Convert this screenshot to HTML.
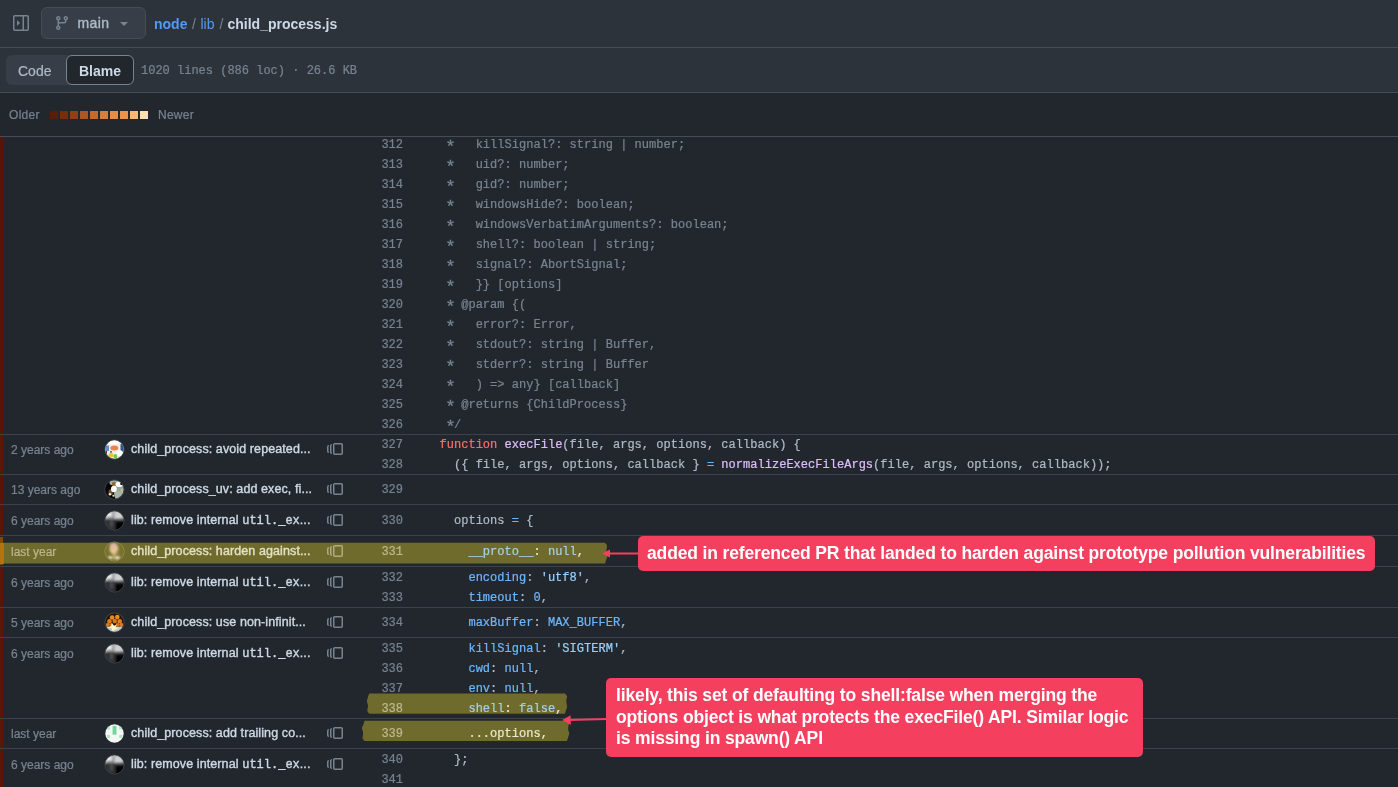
<!DOCTYPE html>
<html>
<head>
<meta charset="utf-8">
<title>node/lib/child_process.js blame</title>
<style>
*{box-sizing:border-box;margin:0;padding:0}
html,body{width:1398px;height:787px;overflow:hidden;background:#22272e}
body{position:relative;font-family:"Liberation Sans",sans-serif;color:#adbac7;font-size:12px}
.abs{position:absolute}
.hdr{position:absolute;left:0;top:0;width:1398px;height:92px;background:#2d333b}
.hl{position:absolute;left:0;width:1398px;height:1px;background:#444c56}
.sep{position:absolute;left:0;width:1398px;height:1px;background:#3a424c}
.branch{position:absolute;left:41px;top:7px;width:105px;height:32px;background:#373e47;border:1px solid #444c56;border-radius:6px}
.crumb{position:absolute;top:14px;font-size:14px;line-height:20px;font-weight:bold;white-space:nowrap}
.seg{position:absolute;left:6px;top:55px;width:128px;height:30px;background:#373e47;border-radius:6px}
.seg .on{position:absolute;left:60px;top:0;width:68px;height:30px;background:#22272e;border:1px solid #768390;border-radius:6px}
.mono{font-family:"Liberation Mono",monospace}
.ln{position:absolute;left:360px;width:43px;text-align:right;font-family:"Liberation Mono",monospace;font-size:12px;line-height:20px;height:20px;color:#768390;white-space:pre}
.cd{position:absolute;left:439.5px;font-family:"Liberation Mono",monospace;font-size:12px;line-height:20px;height:20px;color:#adbac7;white-space:pre}
.a{font-style:normal;display:inline-block;transform:translateY(2.6px) scale(1.45)}
.hi{color:#ebe8cc}.hi .n{color:#a4d0e2}
.c{color:#768390}.k{color:#f47067}.e{color:#dcbdfb}.n{color:#6cb6ff}.s{color:#96d0ff}
.tm{position:absolute;left:11px;font-size:12px;line-height:20px;height:20px;color:#768390;white-space:nowrap}
.msg{position:absolute;left:131px;font-size:12.5px;letter-spacing:0.1px;line-height:20px;height:20px;color:#cdd9e5;white-space:nowrap}
.msg .mono{font-size:12px;letter-spacing:0}
.av{position:absolute;left:104.5px;width:19px;height:19px;border-radius:50%;overflow:hidden}
.strip{position:absolute;left:0;width:3px}
.note{position:absolute;background:#f43f5e;border-radius:5px;color:#fff;font-weight:bold;white-space:nowrap}
.cd,.ln,.tm,#tcode,#stats,#older,#newer{-webkit-text-stroke:0.22px currentColor}
.msg,#main{-webkit-text-stroke:0.38px currentColor}
.cd{letter-spacing:0.025px}
#wrap{position:absolute;left:0;top:0;width:1398px;height:787px;will-change:transform}
</style>
</head>
<body>
<div id="wrap">
<div class="hdr"></div>
<div class="hl" style="top:47px"></div>
<div class="hl" style="top:92px"></div>
<div class="hl" style="top:136px"></div>

<!-- header row 1 -->
<svg class="abs" style="left:13px;top:15px" width="16" height="16" viewBox="0 0 16 16" fill="#768390"><path d="M6.823 7.823a.25.25 0 0 1 0 .354l-2.396 2.396A.25.25 0 0 1 4 10.396V5.604a.25.25 0 0 1 .427-.177Z"/><path d="M1.75 0h12.5C15.216 0 16 .784 16 1.750v12.5A1.750 1.750 0 0 1 14.250 16H1.750A1.750 1.750 0 0 1 0 14.250V1.750C0 .784.784 0 1.750 0ZM1.500 1.750v12.500c0 .138.112.250.250.250H9.500v-13H1.750a.25.25 0 0 0-.250.250ZM11 14.500h3.250a.25.25 0 0 0 .250-.250V1.750a.25.25 0 0 0-.250-.250H11Z"/></svg>
<div class="branch"></div>
<svg class="abs" style="left:54px;top:15px" width="16" height="16" viewBox="0 0 16 16" fill="#768390"><path d="M9.500 3.250a2.250 2.250 0 1 1 3 2.122V6A2.500 2.500 0 0 1 10 8.500H6a1 1 0 0 0-1 1v1.128a2.251 2.251 0 1 1-1.500 0V5.372a2.250 2.250 0 1 1 1.500 0v1.836A2.493 2.493 0 0 1 6 7h4a1 1 0 0 0 1-1v-.628A2.250 2.250 0 0 1 9.500 3.250Zm-6 0a.75.75 0 1 0 1.500 0 .75.75 0 0 0-1.500 0Zm8.250-.750a.75.75 0 1 0 0 1.500.75.75 0 0 0 0-1.500ZM4.250 12a.75.75 0 1 0 0 1.500.75.75 0 0 0 0-1.500Z"/></svg>
<div class="abs" id="main" style="left:77.5px;top:13px;font-size:14px;letter-spacing:0.4px;line-height:20px;color:#adbac7">main</div>
<svg class="abs" style="left:120px;top:22px" width="8" height="4" viewBox="0 0 8 4"><path d="M0 0h8L4 4z" fill="#768390"/></svg>
<div class="crumb" id="cr1" style="left:154px;color:#539bf5">node</div>
<div class="crumb" style="left:192px;color:#768390;font-weight:normal">/</div>
<div class="crumb" id="cr2" style="left:200.5px;color:#539bf5;font-weight:normal">lib</div>
<div class="crumb" style="left:219.5px;color:#768390;font-weight:normal">/</div>
<div class="crumb" id="cr3" style="left:227.5px;color:#cdd9e5">child_process.js</div>

<!-- header row 2 -->
<div class="seg"><div class="on"></div></div>
<div class="abs" id="tcode" style="left:18px;top:61px;font-size:14px;line-height:20px;color:#adbac7">Code</div>
<div class="abs" id="tblame" style="left:79px;top:61px;font-size:14px;line-height:20px;color:#cdd9e5;font-weight:bold">Blame</div>
<div class="abs mono" id="stats" style="left:141px;top:61px;font-size:12px;line-height:20px;color:#768390;white-space:pre">1020 lines (886 loc) · 26.6 KB</div>

<!-- header row 3 -->
<div class="abs" id="older" style="left:9px;top:105px;font-size:12px;letter-spacing:0.3px;line-height:20px;color:#768390">Older</div>
<div class="abs" id="newer" style="left:158px;top:105px;font-size:12px;letter-spacing:0.25px;line-height:20px;color:#768390">Newer</div>
<!--GEN-->
<div class="abs" style="left:50px;top:111px;width:8px;height:8px;background:#5a1e02"></div>
<div class="abs" style="left:60px;top:111px;width:8px;height:8px;background:#762d0a"></div>
<div class="abs" style="left:70px;top:111px;width:8px;height:8px;background:#953e12"></div>
<div class="abs" style="left:80px;top:111px;width:8px;height:8px;background:#ae5622"></div>
<div class="abs" style="left:90px;top:111px;width:8px;height:8px;background:#c46a2c"></div>
<div class="abs" style="left:100px;top:111px;width:8px;height:8px;background:#d97e38"></div>
<div class="abs" style="left:110px;top:111px;width:8px;height:8px;background:#e88c42"></div>
<div class="abs" style="left:120px;top:111px;width:8px;height:8px;background:#ee9248"></div>
<div class="abs" style="left:130px;top:111px;width:8px;height:8px;background:#fbb975"></div>
<div class="abs" style="left:140px;top:111px;width:8px;height:8px;background:#fddfb0"></div>
<div class="sep" style="top:434px"></div>
<div class="sep" style="top:474px"></div>
<div class="sep" style="top:504px"></div>
<div class="sep" style="top:535px"></div>
<div class="sep" style="top:566px"></div>
<div class="sep" style="top:607px"></div>
<div class="sep" style="top:637px"></div>
<div class="sep" style="top:718px"></div>
<div class="sep" style="top:748px"></div>
<div class="strip" style="top:137px;height:297px;background:#541802"></div>
<div class="strip" style="top:435px;height:39px;background:#571902"></div>
<div class="strip" style="top:475px;height:29px;background:#541802"></div>
<div class="strip" style="top:505px;height:30px;background:#551802"></div>
<div class="strip" style="top:537px;height:28px;background:#8a4406"></div>
<div class="strip" style="top:567px;height:40px;background:#551802"></div>
<div class="strip" style="top:608px;height:29px;background:#571902"></div>
<div class="strip" style="top:638px;height:80px;background:#551802"></div>
<div class="strip" style="top:719px;height:29px;background:#571902"></div>
<div class="strip" style="top:749px;height:38px;background:#551802"></div>
<svg class="abs" style="left:0;top:0" width="700" height="787" viewBox="0 0 700 787"><g fill="#6f6b2c"><path d="M0.0 542.7H605.0Q607.9 545.3 606.7 547.9Q606.4 550.5 606.7 553.0Q608.4 555.6 606.7 558.2Q605.9 560.8 605.0 563.4H0.0H0.0V542.7Z"/><path d="M369.3 693.6H564.8Q568.4 696.1 566.5 698.6Q566.3 701.2 566.5 703.7Q567.6 706.2 566.5 708.8Q565.6 711.3 564.8 713.8H369.3Q366.4 711.3 367.6 708.8Q368.4 706.2 367.6 703.7Q366.2 701.2 367.6 698.6Q368.0 696.1 369.3 693.6Z"/><path d="M364.6 720.7H566.8Q569.8 723.2 568.5 725.8Q567.9 728.3 568.5 730.9Q569.9 733.4 568.5 735.9Q568.0 738.5 566.8 741.0H364.6Q361.5 738.5 362.9 735.9Q363.2 733.4 362.9 730.9Q361.0 728.3 362.9 725.8Q363.8 723.2 364.6 720.7Z"/></g></svg>
<div class="abs" style="left:0;top:542.5px;width:3.5px;height:21px;background:#b5730d"></div>
<div class="ln" style="top:135px">312</div>
<div class="cd" style="top:135px"><span class="c"> <i class="a">*</i>   killSignal?: string | number;</span></div>
<div class="ln" style="top:155px">313</div>
<div class="cd" style="top:155px"><span class="c"> <i class="a">*</i>   uid?: number;</span></div>
<div class="ln" style="top:175px">314</div>
<div class="cd" style="top:175px"><span class="c"> <i class="a">*</i>   gid?: number;</span></div>
<div class="ln" style="top:195px">315</div>
<div class="cd" style="top:195px"><span class="c"> <i class="a">*</i>   windowsHide?: boolean;</span></div>
<div class="ln" style="top:215px">316</div>
<div class="cd" style="top:215px"><span class="c"> <i class="a">*</i>   windowsVerbatimArguments?: boolean;</span></div>
<div class="ln" style="top:235px">317</div>
<div class="cd" style="top:235px"><span class="c"> <i class="a">*</i>   shell?: boolean | string;</span></div>
<div class="ln" style="top:255px">318</div>
<div class="cd" style="top:255px"><span class="c"> <i class="a">*</i>   signal?: AbortSignal;</span></div>
<div class="ln" style="top:275px">319</div>
<div class="cd" style="top:275px"><span class="c"> <i class="a">*</i>   }} [options]</span></div>
<div class="ln" style="top:295px">320</div>
<div class="cd" style="top:295px"><span class="c"> <i class="a">*</i> @param {(</span></div>
<div class="ln" style="top:315px">321</div>
<div class="cd" style="top:315px"><span class="c"> <i class="a">*</i>   error?: Error,</span></div>
<div class="ln" style="top:335px">322</div>
<div class="cd" style="top:335px"><span class="c"> <i class="a">*</i>   stdout?: string | Buffer,</span></div>
<div class="ln" style="top:355px">323</div>
<div class="cd" style="top:355px"><span class="c"> <i class="a">*</i>   stderr?: string | Buffer</span></div>
<div class="ln" style="top:375px">324</div>
<div class="cd" style="top:375px"><span class="c"> <i class="a">*</i>   ) =&gt; any} [callback]</span></div>
<div class="ln" style="top:395px">325</div>
<div class="cd" style="top:395px"><span class="c"> <i class="a">*</i> @returns {ChildProcess}</span></div>
<div class="ln" style="top:415px">326</div>
<div class="cd" style="top:415px"><span class="c"> <i class="a">*</i>/</span></div>
<div class="ln" style="top:435px">327</div>
<div class="cd" style="top:435px"><span class="k">function</span> <span class="e">execFile</span>(file, args, options, callback) {</div>
<div class="ln" style="top:455px">328</div>
<div class="cd" style="top:455px">  ({ file, args, options, callback } <span class="n">=</span> <span class="e">normalizeExecFileArgs</span>(file, args, options, callback));</div>
<div class="ln" style="top:480px">329</div>
<div class="ln" style="top:511px">330</div>
<div class="cd" style="top:511px">  options <span class="n">=</span> {</div>
<div class="ln" style="top:542px;color:#bdb98e">331</div>
<div class="cd hi" style="top:542px">    <span class="n">__proto__</span>: <span class="n">null</span>,</div>
<div class="ln" style="top:568px">332</div>
<div class="cd" style="top:568px">    <span class="n">encoding</span>: <span class="s">'utf8'</span>,</div>
<div class="ln" style="top:588px">333</div>
<div class="cd" style="top:588px">    <span class="n">timeout</span>: <span class="n">0</span>,</div>
<div class="ln" style="top:613px">334</div>
<div class="cd" style="top:613px">    <span class="n">maxBuffer</span>: <span class="n">MAX_BUFFER</span>,</div>
<div class="ln" style="top:639px">335</div>
<div class="cd" style="top:639px">    <span class="n">killSignal</span>: <span class="s">'SIGTERM'</span>,</div>
<div class="ln" style="top:659px">336</div>
<div class="cd" style="top:659px">    <span class="n">cwd</span>: <span class="n">null</span>,</div>
<div class="ln" style="top:679px">337</div>
<div class="cd" style="top:679px">    <span class="n">env</span>: <span class="n">null</span>,</div>
<div class="ln" style="top:699px;color:#bdb98e">338</div>
<div class="cd hi" style="top:699px">    <span class="n">shell</span>: <span class="n">false</span>,</div>
<div class="ln" style="top:724px;color:#bdb98e">339</div>
<div class="cd hi" style="top:724px">    ...options,</div>
<div class="ln" style="top:750px">340</div>
<div class="cd" style="top:750px">  };</div>
<div class="ln" style="top:770px">341</div>
<div class="tm" style="top:440px">2 years ago</div>
<svg class="abs" style="left:103.5px;top:438.5px" width="21" height="21" viewBox="-10.5 -10.5 21 21"><defs><clipPath id="cc1"><circle r="9.2"/></clipPath><filter id="bl1" filterUnits="userSpaceOnUse" x="-14" y="-14" width="28" height="28"><feGaussianBlur stdDeviation="0.7"/></filter></defs><circle r="9.6" fill="none" stroke="rgba(205,217,229,0.18)" stroke-width="0.9"/><g clip-path="url(#cc1)"><rect x="-11" y="-11" width="22" height="22" fill="#f4efe6"/><g filter="url(#bl1)"><rect x="-11" y="-4" width="5.5" height="5.5" fill="#5b8fd0"/><rect x="6" y="-5.5" width="5" height="7.5" fill="#2a578f"/><rect x="-10.5" y="1.5" width="3" height="3" fill="#7a2a18"/><ellipse cx="-0.2" cy="-1.4" rx="4" ry="2.5" fill="#f07f4c"/><rect x="-4.3" y="1.6" width="1.6" height="1.6" fill="#444"/><ellipse cx="-3.6" cy="5.8" rx="2.5" ry="2.2" fill="#f0c026"/><ellipse cx="0.9" cy="7" rx="1.9" ry="2.4" fill="#72cc33"/><ellipse cx="5" cy="3.5" rx="3" ry="3" fill="#fff"/><ellipse cx="-1" cy="-7" rx="5" ry="2" fill="#fff"/></g></g></svg>
<div class="msg" style="top:438.5px">child_process: avoid repeated...</div>
<svg class="abs" style="left:327px;top:440.8px" width="16" height="16" viewBox="0 0 16 16" fill="#768390"><path d="M7.75 14A1.75 1.75 0 0 1 6 12.25v-8.5C6 2.784 6.784 2 7.75 2h6.5c.966 0 1.75.784 1.75 1.75v8.5A1.75 1.75 0 0 1 14.25 14Zm-.25-1.75c0 .138.112.25.25.25h6.5a.25.25 0 0 0 .25-.25v-8.5a.25.25 0 0 0-.25-.25h-6.5a.25.25 0 0 0-.25.25ZM4.9 3.508a.75.75 0 0 1-.274 1.025.249.249 0 0 0-.126.217v6.5c0 .09.048.173.126.217a.75.75 0 0 1-.752 1.298A1.75 1.75 0 0 1 3 11.25v-6.5c0-.649.353-1.214.874-1.516a.75.75 0 0 1 1.025.274ZM1.625 5.533h.001a.249.249 0 0 0-.126.217v4.5c0 .09.048.173.126.217a.75.75 0 0 1-.752 1.298A1.748 1.748 0 0 1 0 10.25v-4.5a1.748 1.748 0 0 1 .873-1.516.75.75 0 1 1 .752 1.299Z"/></svg>
<div class="tm" style="top:480px">13 years ago</div>
<svg class="abs" style="left:103.5px;top:478.5px" width="21" height="21" viewBox="-10.5 -10.5 21 21"><defs><clipPath id="cc2"><circle r="9.2"/></clipPath><filter id="bl2" filterUnits="userSpaceOnUse" x="-14" y="-14" width="28" height="28"><feGaussianBlur stdDeviation="0.6"/></filter></defs><circle r="9.6" fill="none" stroke="rgba(205,217,229,0.18)" stroke-width="0.9"/><g clip-path="url(#cc2)"><rect x="-11" y="-11" width="22" height="22" fill="#070707"/><g filter="url(#bl2)"><path d="M-2 -10L10 -10L10 10L1 10L-1 2Z" fill="#97a498"/><ellipse cx="-2" cy="-7" rx="3" ry="2.6" fill="#a6b3a4"/><ellipse cx="-0.6" cy="-5.5" rx="2" ry="2.2" fill="#8b6a38"/><ellipse cx="-3.8" cy="2.8" rx="2.2" ry="3" fill="#74562c"/><ellipse cx="4.6" cy="-5.2" rx="3.5" ry="2.8" fill="#ffffff"/><circle cx="6.8" cy="-5.6" r="1.1" fill="#000"/><ellipse cx="-0.6" cy="-0.6" rx="2.9" ry="3.2" fill="#fdfdf8"/><ellipse cx="-4.6" cy="4.8" rx="1.2" ry="1.2" fill="#efe6d0"/><ellipse cx="-1.2" cy="6.2" rx="1" ry="1" fill="#e8dfc8"/><ellipse cx="7.6" cy="1.4" rx="1.6" ry="2.6" fill="#c7b49a"/><ellipse cx="4" cy="5.5" rx="4" ry="4.2" fill="#a7b4a8"/></g></g></svg>
<div class="msg" style="top:478.5px">child_process_uv: add exec, fi...</div>
<svg class="abs" style="left:327px;top:480.8px" width="16" height="16" viewBox="0 0 16 16" fill="#768390"><path d="M7.75 14A1.75 1.75 0 0 1 6 12.25v-8.5C6 2.784 6.784 2 7.75 2h6.5c.966 0 1.75.784 1.75 1.75v8.5A1.75 1.75 0 0 1 14.25 14Zm-.25-1.75c0 .138.112.25.25.25h6.5a.25.25 0 0 0 .25-.25v-8.5a.25.25 0 0 0-.25-.25h-6.5a.25.25 0 0 0-.25.25ZM4.9 3.508a.75.75 0 0 1-.274 1.025.249.249 0 0 0-.126.217v6.5c0 .09.048.173.126.217a.75.75 0 0 1-.752 1.298A1.75 1.75 0 0 1 3 11.25v-6.5c0-.649.353-1.214.874-1.516a.75.75 0 0 1 1.025.274ZM1.625 5.533h.001a.249.249 0 0 0-.126.217v4.5c0 .09.048.173.126.217a.75.75 0 0 1-.752 1.298A1.748 1.748 0 0 1 0 10.25v-4.5a1.748 1.748 0 0 1 .873-1.516.75.75 0 1 1 .752 1.299Z"/></svg>
<div class="tm" style="top:511px">6 years ago</div>
<svg class="abs" style="left:103.5px;top:509.5px" width="21" height="21" viewBox="-10.5 -10.5 21 21"><defs><clipPath id="cc3"><circle r="9.2"/></clipPath><filter id="bl3" filterUnits="userSpaceOnUse" x="-14" y="-14" width="28" height="28"><feGaussianBlur stdDeviation="0.8"/></filter></defs><circle r="9.6" fill="none" stroke="rgba(205,217,229,0.18)" stroke-width="0.9"/><g clip-path="url(#cc3)"><rect x="-11" y="-11" width="22" height="22" fill="#3a3d3f"/><g filter="url(#bl3)"><rect x="-11" y="-11" width="22" height="9.5" fill="#aeb0b1"/><ellipse cx="-5.5" cy="-5.5" rx="3.6" ry="2.6" fill="#efefef"/><ellipse cx="4" cy="-5" rx="4.2" ry="3.4" fill="#cfd0d1"/><rect x="-2.2" y="-7" width="1.3" height="7" fill="#6a6c6e"/><rect x="-7" y="-4" width="4" height="4" fill="#8a8c8d"/><rect x="-11" y="-1.5" width="12" height="13" fill="#303334"/><rect x="1" y="1.2" width="10" height="10" fill="#030303"/><rect x="-4" y="-1" width="2" height="7" fill="#565959"/></g></g></svg>
<div class="msg" style="top:509.5px">lib: remove internal <span class="mono">util._ex</span>...</div>
<svg class="abs" style="left:327px;top:511.8px" width="16" height="16" viewBox="0 0 16 16" fill="#768390"><path d="M7.75 14A1.75 1.75 0 0 1 6 12.25v-8.5C6 2.784 6.784 2 7.75 2h6.5c.966 0 1.75.784 1.75 1.75v8.5A1.75 1.75 0 0 1 14.25 14Zm-.25-1.75c0 .138.112.25.25.25h6.5a.25.25 0 0 0 .25-.25v-8.5a.25.25 0 0 0-.25-.25h-6.5a.25.25 0 0 0-.25.25ZM4.9 3.508a.75.75 0 0 1-.274 1.025.249.249 0 0 0-.126.217v6.5c0 .09.048.173.126.217a.75.75 0 0 1-.752 1.298A1.75 1.75 0 0 1 3 11.25v-6.5c0-.649.353-1.214.874-1.516a.75.75 0 0 1 1.025.274ZM1.625 5.533h.001a.249.249 0 0 0-.126.217v4.5c0 .09.048.173.126.217a.75.75 0 0 1-.752 1.298A1.748 1.748 0 0 1 0 10.25v-4.5a1.748 1.748 0 0 1 .873-1.516.75.75 0 1 1 .752 1.299Z"/></svg>
<div class="tm" style="top:542px;color:#b9b58c">last year</div>
<svg class="abs" style="left:103.5px;top:540.5px" width="21" height="21" viewBox="-10.5 -10.5 21 21"><defs><clipPath id="cc4"><circle r="9.2"/></clipPath><filter id="bl4" filterUnits="userSpaceOnUse" x="-14" y="-14" width="28" height="28"><feGaussianBlur stdDeviation="0.8"/></filter></defs><circle r="9.6" fill="none" stroke="rgba(190,188,130,0.5)" stroke-width="0.9"/><g clip-path="url(#cc4)"><rect x="-11" y="-11" width="22" height="22" fill="#77722f"/><g filter="url(#bl4)"><ellipse cx="-0.5" cy="-2.6" rx="4.4" ry="5.4" fill="#e4c493"/><ellipse cx="-1" cy="-6.3" rx="3.4" ry="2.2" fill="#dfb9aa"/><rect x="-1.2" y="2.4" width="2" height="5.6" fill="#cdc47e"/><ellipse cx="3.5" cy="1" rx="1.5" ry="2.5" fill="#9a7a3a"/><ellipse cx="-4.2" cy="6.2" rx="2.1" ry="1.4" fill="#fdfae8"/><ellipse cx="3.2" cy="6.2" rx="2.3" ry="1.5" fill="#fdfae8"/></g></g></svg>
<div class="msg" style="top:540.5px;color:#e4e1c4">child_process: harden against...</div>
<svg class="abs" style="left:327px;top:542.8px" width="16" height="16" viewBox="0 0 16 16" fill="#aeab80"><path d="M7.75 14A1.75 1.75 0 0 1 6 12.25v-8.5C6 2.784 6.784 2 7.75 2h6.5c.966 0 1.75.784 1.75 1.75v8.5A1.75 1.75 0 0 1 14.25 14Zm-.25-1.75c0 .138.112.25.25.25h6.5a.25.25 0 0 0 .25-.25v-8.5a.25.25 0 0 0-.25-.25h-6.5a.25.25 0 0 0-.25.25ZM4.9 3.508a.75.75 0 0 1-.274 1.025.249.249 0 0 0-.126.217v6.5c0 .09.048.173.126.217a.75.75 0 0 1-.752 1.298A1.75 1.75 0 0 1 3 11.25v-6.5c0-.649.353-1.214.874-1.516a.75.75 0 0 1 1.025.274ZM1.625 5.533h.001a.249.249 0 0 0-.126.217v4.5c0 .09.048.173.126.217a.75.75 0 0 1-.752 1.298A1.748 1.748 0 0 1 0 10.25v-4.5a1.748 1.748 0 0 1 .873-1.516.75.75 0 1 1 .752 1.299Z"/></svg>
<div class="tm" style="top:573px">6 years ago</div>
<svg class="abs" style="left:103.5px;top:571.5px" width="21" height="21" viewBox="-10.5 -10.5 21 21"><defs><clipPath id="cc3"><circle r="9.2"/></clipPath><filter id="bl3" filterUnits="userSpaceOnUse" x="-14" y="-14" width="28" height="28"><feGaussianBlur stdDeviation="0.8"/></filter></defs><circle r="9.6" fill="none" stroke="rgba(205,217,229,0.18)" stroke-width="0.9"/><g clip-path="url(#cc3)"><rect x="-11" y="-11" width="22" height="22" fill="#3a3d3f"/><g filter="url(#bl3)"><rect x="-11" y="-11" width="22" height="9.5" fill="#aeb0b1"/><ellipse cx="-5.5" cy="-5.5" rx="3.6" ry="2.6" fill="#efefef"/><ellipse cx="4" cy="-5" rx="4.2" ry="3.4" fill="#cfd0d1"/><rect x="-2.2" y="-7" width="1.3" height="7" fill="#6a6c6e"/><rect x="-7" y="-4" width="4" height="4" fill="#8a8c8d"/><rect x="-11" y="-1.5" width="12" height="13" fill="#303334"/><rect x="1" y="1.2" width="10" height="10" fill="#030303"/><rect x="-4" y="-1" width="2" height="7" fill="#565959"/></g></g></svg>
<div class="msg" style="top:571.5px">lib: remove internal <span class="mono">util._ex</span>...</div>
<svg class="abs" style="left:327px;top:573.8px" width="16" height="16" viewBox="0 0 16 16" fill="#768390"><path d="M7.75 14A1.75 1.75 0 0 1 6 12.25v-8.5C6 2.784 6.784 2 7.75 2h6.5c.966 0 1.75.784 1.75 1.75v8.5A1.75 1.75 0 0 1 14.25 14Zm-.25-1.75c0 .138.112.25.25.25h6.5a.25.25 0 0 0 .25-.25v-8.5a.25.25 0 0 0-.25-.25h-6.5a.25.25 0 0 0-.25.25ZM4.9 3.508a.75.75 0 0 1-.274 1.025.249.249 0 0 0-.126.217v6.5c0 .09.048.173.126.217a.75.75 0 0 1-.752 1.298A1.75 1.75 0 0 1 3 11.25v-6.5c0-.649.353-1.214.874-1.516a.75.75 0 0 1 1.025.274ZM1.625 5.533h.001a.249.249 0 0 0-.126.217v4.5c0 .09.048.173.126.217a.75.75 0 0 1-.752 1.298A1.748 1.748 0 0 1 0 10.25v-4.5a1.748 1.748 0 0 1 .873-1.516.75.75 0 1 1 .752 1.299Z"/></svg>
<div class="tm" style="top:613px">5 years ago</div>
<svg class="abs" style="left:103.5px;top:611.5px" width="21" height="21" viewBox="-10.5 -10.5 21 21"><defs><clipPath id="cc5"><circle r="9.2"/></clipPath><filter id="bl5" filterUnits="userSpaceOnUse" x="-14" y="-14" width="28" height="28"><feGaussianBlur stdDeviation="0.55"/></filter></defs><circle r="9.6" fill="none" stroke="rgba(205,217,229,0.18)" stroke-width="0.9"/><g clip-path="url(#cc5)"><rect x="-11" y="-11" width="22" height="22" fill="#6d6c66"/><g filter="url(#bl5)"><rect x="-11" y="-11" width="22" height="15" fill="#241404"/><circle cx="-2.4" cy="-5" r="2.3" fill="#e88c24"/><circle cx="2.8" cy="-5.4" r="2.3" fill="#e88c24"/><circle cx="-5" cy="-1.2" r="2.3" fill="#e07c1c"/><circle cx="0.2" cy="-1.4" r="2.3" fill="#de7818"/><circle cx="5.2" cy="-1.3" r="2.3" fill="#e2801e"/><circle cx="-6.6" cy="2.2" r="2" fill="#da781c"/><circle cx="6.8" cy="2.2" r="2" fill="#da781c"/><circle cx="3.2" cy="2.2" r="1.9" fill="#d47218"/><circle cx="-3.2" cy="2.2" r="1.6" fill="#d47218"/><rect x="-11" y="4.2" width="22" height="8" fill="#c3c7c4"/><path d="M-2.6 0.5L-0.5 3.3L2.3 2L1 5L5 5.3L0.2 7.2L-1.8 9.5L-3 5.4L-6.5 5.2L-3.5 3.5Z" fill="#fff3c8"/></g></g></svg>
<div class="msg" style="top:611.5px">child_process: use non-infinit...</div>
<svg class="abs" style="left:327px;top:613.8px" width="16" height="16" viewBox="0 0 16 16" fill="#768390"><path d="M7.75 14A1.75 1.75 0 0 1 6 12.25v-8.5C6 2.784 6.784 2 7.75 2h6.5c.966 0 1.75.784 1.75 1.75v8.5A1.75 1.75 0 0 1 14.25 14Zm-.25-1.75c0 .138.112.25.25.25h6.5a.25.25 0 0 0 .25-.25v-8.5a.25.25 0 0 0-.25-.25h-6.5a.25.25 0 0 0-.25.25ZM4.9 3.508a.75.75 0 0 1-.274 1.025.249.249 0 0 0-.126.217v6.5c0 .09.048.173.126.217a.75.75 0 0 1-.752 1.298A1.75 1.75 0 0 1 3 11.25v-6.5c0-.649.353-1.214.874-1.516a.75.75 0 0 1 1.025.274ZM1.625 5.533h.001a.249.249 0 0 0-.126.217v4.5c0 .09.048.173.126.217a.75.75 0 0 1-.752 1.298A1.748 1.748 0 0 1 0 10.25v-4.5a1.748 1.748 0 0 1 .873-1.516.75.75 0 1 1 .752 1.299Z"/></svg>
<div class="tm" style="top:644px">6 years ago</div>
<svg class="abs" style="left:103.5px;top:642.5px" width="21" height="21" viewBox="-10.5 -10.5 21 21"><defs><clipPath id="cc3"><circle r="9.2"/></clipPath><filter id="bl3" filterUnits="userSpaceOnUse" x="-14" y="-14" width="28" height="28"><feGaussianBlur stdDeviation="0.8"/></filter></defs><circle r="9.6" fill="none" stroke="rgba(205,217,229,0.18)" stroke-width="0.9"/><g clip-path="url(#cc3)"><rect x="-11" y="-11" width="22" height="22" fill="#3a3d3f"/><g filter="url(#bl3)"><rect x="-11" y="-11" width="22" height="9.5" fill="#aeb0b1"/><ellipse cx="-5.5" cy="-5.5" rx="3.6" ry="2.6" fill="#efefef"/><ellipse cx="4" cy="-5" rx="4.2" ry="3.4" fill="#cfd0d1"/><rect x="-2.2" y="-7" width="1.3" height="7" fill="#6a6c6e"/><rect x="-7" y="-4" width="4" height="4" fill="#8a8c8d"/><rect x="-11" y="-1.5" width="12" height="13" fill="#303334"/><rect x="1" y="1.2" width="10" height="10" fill="#030303"/><rect x="-4" y="-1" width="2" height="7" fill="#565959"/></g></g></svg>
<div class="msg" style="top:642.5px">lib: remove internal <span class="mono">util._ex</span>...</div>
<svg class="abs" style="left:327px;top:644.8px" width="16" height="16" viewBox="0 0 16 16" fill="#768390"><path d="M7.75 14A1.75 1.75 0 0 1 6 12.25v-8.5C6 2.784 6.784 2 7.75 2h6.5c.966 0 1.75.784 1.75 1.75v8.5A1.75 1.75 0 0 1 14.25 14Zm-.25-1.75c0 .138.112.25.25.25h6.5a.25.25 0 0 0 .25-.25v-8.5a.25.25 0 0 0-.25-.25h-6.5a.25.25 0 0 0-.25.25ZM4.9 3.508a.75.75 0 0 1-.274 1.025.249.249 0 0 0-.126.217v6.5c0 .09.048.173.126.217a.75.75 0 0 1-.752 1.298A1.75 1.75 0 0 1 3 11.25v-6.5c0-.649.353-1.214.874-1.516a.75.75 0 0 1 1.025.274ZM1.625 5.533h.001a.249.249 0 0 0-.126.217v4.5c0 .09.048.173.126.217a.75.75 0 0 1-.752 1.298A1.748 1.748 0 0 1 0 10.25v-4.5a1.748 1.748 0 0 1 .873-1.516.75.75 0 1 1 .752 1.299Z"/></svg>
<div class="tm" style="top:724px">last year</div>
<svg class="abs" style="left:103.5px;top:722.5px" width="21" height="21" viewBox="-10.5 -10.5 21 21"><defs><clipPath id="cc6"><circle r="9.2"/></clipPath><filter id="bl6" filterUnits="userSpaceOnUse" x="-14" y="-14" width="28" height="28"><feGaussianBlur stdDeviation="0.6"/></filter></defs><circle r="9.6" fill="none" stroke="rgba(0,0,0,0)" stroke-width="0.9"/><g clip-path="url(#cc6)"><rect x="-11" y="-11" width="22" height="22" fill="#f6f6f6"/><g filter="url(#bl6)"><rect x="-1.9" y="-7.6" width="3.9" height="8.8" fill="#76d69a"/><rect x="-7.5" y="-7.5" width="3" height="3.5" fill="#b0e9cc"/><rect x="4.5" y="-7.5" width="3" height="3.5" fill="#b0e9cc"/><rect x="-7.5" y="1.5" width="3" height="3" fill="#a8e6c4"/><rect x="4.8" y="1.5" width="3" height="3" fill="#a8e6c4"/></g></g></svg>
<div class="msg" style="top:722.5px">child_process: add trailing co...</div>
<svg class="abs" style="left:327px;top:724.8px" width="16" height="16" viewBox="0 0 16 16" fill="#768390"><path d="M7.75 14A1.75 1.75 0 0 1 6 12.25v-8.5C6 2.784 6.784 2 7.75 2h6.5c.966 0 1.75.784 1.75 1.75v8.5A1.75 1.75 0 0 1 14.25 14Zm-.25-1.75c0 .138.112.25.25.25h6.5a.25.25 0 0 0 .25-.25v-8.5a.25.25 0 0 0-.25-.25h-6.5a.25.25 0 0 0-.25.25ZM4.9 3.508a.75.75 0 0 1-.274 1.025.249.249 0 0 0-.126.217v6.5c0 .09.048.173.126.217a.75.75 0 0 1-.752 1.298A1.75 1.75 0 0 1 3 11.25v-6.5c0-.649.353-1.214.874-1.516a.75.75 0 0 1 1.025.274ZM1.625 5.533h.001a.249.249 0 0 0-.126.217v4.5c0 .09.048.173.126.217a.75.75 0 0 1-.752 1.298A1.748 1.748 0 0 1 0 10.25v-4.5a1.748 1.748 0 0 1 .873-1.516.75.75 0 1 1 .752 1.299Z"/></svg>
<div class="tm" style="top:755px">6 years ago</div>
<svg class="abs" style="left:103.5px;top:753.5px" width="21" height="21" viewBox="-10.5 -10.5 21 21"><defs><clipPath id="cc3"><circle r="9.2"/></clipPath><filter id="bl3" filterUnits="userSpaceOnUse" x="-14" y="-14" width="28" height="28"><feGaussianBlur stdDeviation="0.8"/></filter></defs><circle r="9.6" fill="none" stroke="rgba(205,217,229,0.18)" stroke-width="0.9"/><g clip-path="url(#cc3)"><rect x="-11" y="-11" width="22" height="22" fill="#3a3d3f"/><g filter="url(#bl3)"><rect x="-11" y="-11" width="22" height="9.5" fill="#aeb0b1"/><ellipse cx="-5.5" cy="-5.5" rx="3.6" ry="2.6" fill="#efefef"/><ellipse cx="4" cy="-5" rx="4.2" ry="3.4" fill="#cfd0d1"/><rect x="-2.2" y="-7" width="1.3" height="7" fill="#6a6c6e"/><rect x="-7" y="-4" width="4" height="4" fill="#8a8c8d"/><rect x="-11" y="-1.5" width="12" height="13" fill="#303334"/><rect x="1" y="1.2" width="10" height="10" fill="#030303"/><rect x="-4" y="-1" width="2" height="7" fill="#565959"/></g></g></svg>
<div class="msg" style="top:753.5px">lib: remove internal <span class="mono">util._ex</span>...</div>
<svg class="abs" style="left:327px;top:755.8px" width="16" height="16" viewBox="0 0 16 16" fill="#768390"><path d="M7.75 14A1.75 1.75 0 0 1 6 12.25v-8.5C6 2.784 6.784 2 7.75 2h6.5c.966 0 1.75.784 1.75 1.75v8.5A1.75 1.75 0 0 1 14.25 14Zm-.25-1.75c0 .138.112.25.25.25h6.5a.25.25 0 0 0 .25-.25v-8.5a.25.25 0 0 0-.25-.25h-6.5a.25.25 0 0 0-.25.25ZM4.9 3.508a.75.75 0 0 1-.274 1.025.249.249 0 0 0-.126.217v6.5c0 .09.048.173.126.217a.75.75 0 0 1-.752 1.298A1.75 1.75 0 0 1 3 11.25v-6.5c0-.649.353-1.214.874-1.516a.75.75 0 0 1 1.025.274ZM1.625 5.533h.001a.249.249 0 0 0-.126.217v4.5c0 .09.048.173.126.217a.75.75 0 0 1-.752 1.298A1.748 1.748 0 0 1 0 10.25v-4.5a1.748 1.748 0 0 1 .873-1.516.75.75 0 1 1 .752 1.299Z"/></svg>
<div class="note" id="n1" style="left:638px;top:536px;width:737px;height:35px;padding:0 0 0 9px;font-size:17.5px;letter-spacing:-0.145px;line-height:35px">added in referenced PR that landed to harden against prototype pollution vulnerabilities</div>
<div class="note" id="n2" style="left:606px;top:678.3px;width:537px;height:78.7px;padding:7.2px 0 0 10px;font-size:17.5px;letter-spacing:-0.14px;line-height:21.4px">likely, this set of defaulting to shell:false when merging the<br>options object is what protects the execFile() API. Similar logic<br>is missing in spawn() API</div>
<svg class="abs" style="left:600px;top:545px" width="40" height="18" viewBox="0 0 40 18"><path d="M38 8.5H8" stroke="#f43f5e" stroke-width="2"/><path d="M2.3 8.6L10 4.6V12.6Z" fill="#f43f5e"/></svg>
<svg class="abs" style="left:556px;top:708px" width="52" height="24" viewBox="556 708 52 24"><path d="M607 718.9L568 720" stroke="#f43f5e" stroke-width="2"/><path d="M562.2 720.1L570.6 715.3L570.9 725Z" fill="#f43f5e"/></svg>
</div>
</body>
</html>
